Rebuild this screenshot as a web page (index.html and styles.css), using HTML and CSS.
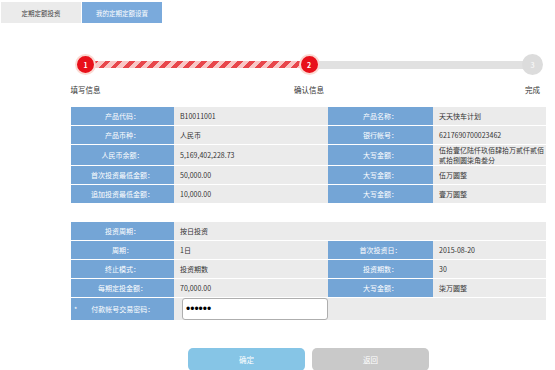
FILE: index.html
```html
<!DOCTYPE html>
<html lang="zh-CN">
<head>
<meta charset="utf-8">
<link rel="stylesheet" href="styles.css">
</head>
<body>
<div class="tabs">
  <div class="tab">定期定额投资</div>
  <div class="tab active">我的定期定额设置</div>
</div>

<div class="steps">
  <div class="dot done">1</div>
  <div class="bar striped"></div>
  <div class="dot done">2</div>
  <div class="bar"></div>
  <div class="dot">3</div>
  <div class="lbl">填写信息</div>
  <div></div>
  <div class="lbl">确认信息</div>
  <div></div>
  <div class="lbl">完成</div>
</div>

<div class="main">
  <table class="info first">
    <colgroup><col class="c1"><col class="c2"><col class="c3"><col class="c4"></colgroup>
    <tr><td class="k">产品代码：</td><td>B10011001</td><td class="k">产品名称：</td><td>天天快车计划</td></tr>
    <tr><td class="k">产品币种：</td><td>人民币</td><td class="k">银行帐号：</td><td>6217690700023462</td></tr>
    <tr><td class="k">人民币余额：</td><td>5,169,402,228.73</td><td class="k">大写金额：</td><td class="two">伍拾壹亿陆仟玖佰肆拾万贰仟贰佰<br>贰拾捌圆柒角叁分</td></tr>
    <tr><td class="k">首次投资最低金额：</td><td>50,000.00</td><td class="k">大写金额：</td><td>伍万圆整</td></tr>
    <tr><td class="k">追加投资最低金额：</td><td>10,000.00</td><td class="k">大写金额：</td><td>壹万圆整</td></tr>
  </table>

  <table class="info second">
    <colgroup><col class="c1"><col class="c2"><col class="c3"><col class="c4"></colgroup>
    <tr><td class="k">投资周期：</td><td colspan="3">按日投资</td></tr>
    <tr><td class="k">周期：</td><td>1日</td><td class="k">首次投资日：</td><td>2015-08-20</td></tr>
    <tr><td class="k">终止模式：</td><td>投资期数</td><td class="k">投资期数：</td><td>30</td></tr>
    <tr><td class="k">每期定投金额：</td><td>70,000.00</td><td class="k">大写金额：</td><td>柒万圆整</td></tr>
    <tr class="pw"><td class="k"><span class="star">*</span>付款帐号交易密码：</td><td class="inp"><input type="password" value="123456"></td><td colspan="2"></td></tr>
  </table>

  <div class="actions">
    <button class="btn ok">确定</button>
    <button class="btn back">返回</button>
  </div>
</div>
</body>
</html>
```
FILE: styles.css
```css
body {
  margin: 0;
  font-family: "Noto Sans CJK SC", "Noto Sans", sans-serif;
  color: #333;
  background: #fff;
}

.tabs {
  display: flex;
  gap: 1px;
  margin: 2px 0 0 1px;
}

.tab {
  width: 80px;
  height: 21px;
  display: flex;
  align-items: center;
  justify-content: center;
  font-size: 6.5px;
  background: #ebebeb;
  color: #444;
}

.tab.active {
  background: #7aaadc;
  color: #fff;
}

.steps {
  display: grid;
  grid-template-columns: 21px 1fr 21px 1fr 21px;
  align-items: center;
  row-gap: 10px;
  width: 468px;
  margin: 31px 0 0 75px;
}

.dot {
  position: relative;
  z-index: 1;
  width: 21px;
  height: 21px;
  box-sizing: border-box;
  border-radius: 50%;
  background: #dcdcdc;
  color: #f4f4f4;
  font-size: 7px;
  font-weight: bold;
  display: flex;
  align-items: center;
  justify-content: center;
}

.dot.done {
  background: #e8101a;
  color: #fff;
  border: 2px solid #fbd9d2;
}

.bar {
  height: 8px;
  background: #e1e1e1;
  margin: 0 -3px;
}

.bar.striped {
  height: 7px;
  background: repeating-linear-gradient(135deg, #e8464b 0 4.2px, #f9c7c6 4.2px 8.5px);
}

.lbl {
  display: flex;
  justify-content: center;
  white-space: nowrap;
  font-size: 7.5px;
  line-height: 10px;
  color: #333;
}

.main {
  margin-left: 71px;
  width: 475px;
}

.info {
  width: 475px;
  table-layout: fixed;
  border-collapse: separate;
  border-spacing: 0;
  font-size: 7px;
  line-height: 10px;
}

.info.first {
  margin-top: 12px;
}

.info.second {
  margin-top: 18px;
}

.c1 { width: 103px; }
.c2 { width: 154px; }
.c3 { width: 105px; }
.c4 { width: 113px; }

.info tr {
  height: 19px;
}

.info td {
  padding: 0 6px;
  border-bottom: 1px solid #fff;
  background: #ebebeb;
  color: #333;
  white-space: nowrap;
}

.info td.k {
  background: #74a5d6;
  color: #fff;
  text-align: center;
}

.info td.two {
  line-height: 10px;
}

.info tr.pw {
  height: 23px;
}

.star {
  float: left;
  margin-left: -3px;
  color: #fff;
}

.info td.inp {
  padding: 0 0 0 8px;
}

.inp input {
  display: block;
  width: 146px;
  height: 22px;
  box-sizing: border-box;
  border: 1px solid #aeaeae;
  border-radius: 3px;
  background: #fff;
  padding: 0 3px;
  font-size: 12px;
  color: #000;
  outline: none;
}

.actions {
  display: flex;
  justify-content: center;
  gap: 7px;
  margin-top: 27px;
}

.btn {
  width: 117px;
  height: 23px;
  border: 0;
  border-radius: 5px;
  color: #fff;
  font-family: inherit;
  font-size: 7.5px;
}

.btn.ok {
  background: #86c5e6;
}

.btn.back {
  background: #c9c9c9;
}
```
